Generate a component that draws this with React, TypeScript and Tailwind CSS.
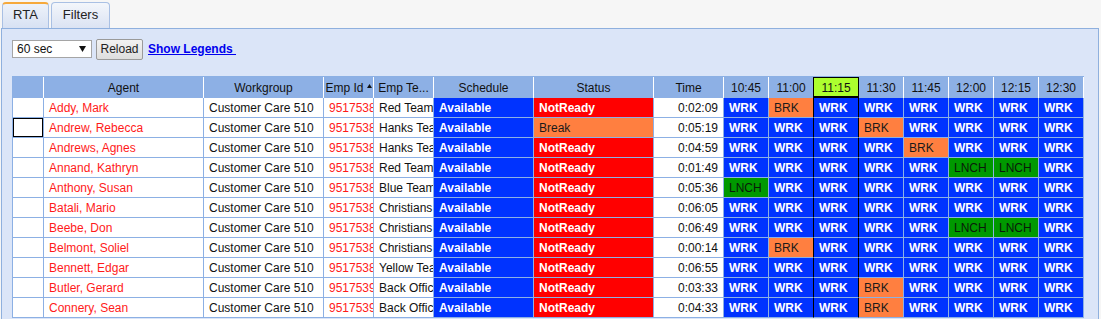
import React from 'react';

const SLOTS = ['10:45', '11:00', '11:15', '11:30', '11:45', '12:00', '12:15', '12:30'];

type Row = { name: string; id: string; team: string; status: 'NotReady' | 'Break'; time: string; plan: string };

// plan: W = work, B = break, L = lunch (one letter per 15 min slot)
const ROWS: Row[] = [
  { name: 'Addy, Mark', id: '951753841', team: 'Red Team', status: 'NotReady', time: '0:02:09', plan: 'WBWWWWWW' },
  { name: 'Andrew, Rebecca', id: '951753851', team: 'Hanks Team', status: 'Break', time: '0:05:19', plan: 'WWWBWWWW' },
  { name: 'Andrews, Agnes', id: '951753852', team: 'Hanks Team', status: 'NotReady', time: '0:04:59', plan: 'WWWWBWWW' },
  { name: 'Annand, Kathryn', id: '951753861', team: 'Red Team', status: 'NotReady', time: '0:01:49', plan: 'WWWWWLLW' },
  { name: 'Anthony, Susan', id: '951753862', team: 'Blue Team', status: 'NotReady', time: '0:05:36', plan: 'LWWWWWWW' },
  { name: 'Batali, Mario', id: '951753871', team: 'Christians Team', status: 'NotReady', time: '0:06:05', plan: 'WWWWWWWW' },
  { name: 'Beebe, Don', id: '951753881', team: 'Christians Team', status: 'NotReady', time: '0:06:49', plan: 'WWWWWLLW' },
  { name: 'Belmont, Soliel', id: '951753891', team: 'Christians Team', status: 'NotReady', time: '0:00:14', plan: 'WBWWWWWW' },
  { name: 'Bennett, Edgar', id: '951753892', team: 'Yellow Team', status: 'NotReady', time: '0:06:55', plan: 'WWWWWWWW' },
  { name: 'Butler, Gerard', id: '951753921', team: 'Back Office', status: 'NotReady', time: '0:03:33', plan: 'WWWBWWWW' },
  { name: 'Connery, Sean', id: '951753951', team: 'Back Office', status: 'NotReady', time: '0:04:33', plan: 'WWWBWWWW' },
];

const cell = 'h-[20px] p-0 border-r border-b border-[#8cb0e4] overflow-hidden whitespace-nowrap';

function slotCell(code: string, i: number) {
  const edge = i === 1 || i === 2 ? 'border-r-black' : '';
  if (code === 'B')
    return <td key={i} className={`${cell} ${edge} bg-[#ff7f40] pl-[5px] text-[#1a1a1a]`}>BRK</td>;
  if (code === 'L')
    return <td key={i} className={`${cell} ${edge} bg-[#009900] pl-[5px] text-[#0a1a0a]`}>LNCH</td>;
  return <td key={i} className={`${cell} ${edge} bg-[#0033ff] pl-[5px] font-bold text-white`}>WRK</td>;
}

export default function App() {
  return (
    <div className="h-[319px] w-[1101px] overflow-hidden bg-[#f6f6f6] font-['Liberation_Sans',Arial,sans-serif] text-[12px] text-[#111]">
      {/* tabs */}
      <div className="flex h-[28px] items-end gap-[2px] pl-[2px]">
        <div className="flex h-[26px] w-[47px] items-center justify-center rounded-t-[4px] border-x border-t-2 border-[#a9c0e4] border-t-[#f6a93b] bg-gradient-to-b from-[#edf2fa] to-[#d7e1f3] pb-[2px] text-[13px] text-[#222]">
          RTA
        </div>
        <div className="flex h-[26px] w-[59px] items-center justify-center rounded-t-[4px] border-x border-t border-[#a9c0e4] bg-gradient-to-b from-[#f3f6fb] to-[#dbe3f3] pb-[1px] text-[13px] text-[#222]">
          Filters
        </div>
      </div>

      {/* panel */}
      <div className="ml-[1px] h-[300px] w-[1098px] border border-[#8fb0de] bg-[#dbe5f8] pl-[10px] pt-[9px]">
        <div className="flex h-[22px] items-center">
          <div className="flex h-[18px] w-[80px] items-center justify-between border border-[#a5a5a5] bg-white pl-[4px] pr-[5px] text-[12px]">
            <span>60 sec</span>
            <svg width="7" height="6" viewBox="0 0 7 6">
              <path d="M0 0h7L3.5 6z" fill="#111" />
            </svg>
          </div>
          <button className="ml-[4px] h-[21px] w-[47px] rounded-[2px] border border-[#9a9a9a] bg-gradient-to-b from-[#f2f2f2] to-[#dedede] text-[12px] text-[#222]">
            Reload
          </button>
          <a className="ml-[5px] text-[12px] font-bold text-[#0000ee] underline">Show Legends&nbsp;</a>
        </div>

        <table className="mt-[16px] w-[1072px] table-fixed border-separate border-spacing-0 border-l border-t border-[#8cb0e4]">
          <colgroup>
            <col className="w-[31px]" />
            <col className="w-[160px]" />
            <col className="w-[120px]" />
            <col className="w-[50px]" />
            <col className="w-[60px]" />
            <col className="w-[100px]" />
            <col className="w-[120px]" />
            <col className="w-[70px]" />
            {SLOTS.map((s) => (
              <col key={s} className="w-[45px]" />
            ))}
          </colgroup>
          <thead>
            <tr className="h-[21px] bg-[#8db0e5] text-[12px] font-normal text-[#111]">
              <th className="border-r border-white p-0 font-normal" />
              <th className="border-r border-white p-0 font-normal">Agent</th>
              <th className="border-r border-white p-0 font-normal">Workgroup</th>
              <th className="overflow-hidden whitespace-nowrap border-r border-white p-0 font-normal">
                Emp Id
                <svg className="ml-[3px] inline-block align-[4px]" width="5" height="4" viewBox="0 0 5 4">
                  <path d="M2.5 0L5 4H0z" fill="#111" />
                </svg>
              </th>
              <th className="overflow-hidden whitespace-nowrap border-r border-white p-0 font-normal">Emp Te...</th>
              <th className="border-r border-white p-0 font-normal">Schedule</th>
              <th className="border-r border-white p-0 font-normal">Status</th>
              <th className="border-r border-white p-0 font-normal">Time</th>
              {SLOTS.map((s, i) =>
                i === 2 ? (
                  <th key={s} className="border-r border-r-black bg-[#adff2f] p-0 font-normal shadow-[inset_0_1px_0_#000,inset_0_-2px_0_#000]">
                    {s}
                  </th>
                ) : (
                  <th key={s} className={`border-r ${i === 1 ? 'border-r-black' : 'border-white'} p-0 font-normal`}>
                    {s}
                  </th>
                ),
              )}
            </tr>
          </thead>
          <tbody>
            {ROWS.map((r, ri) => (
              <tr key={r.name}>
                <td className={`${cell} bg-white ${ri === 1 ? 'shadow-[inset_0_0_0_1px_#000]' : ''}`} />
                <td className={`${cell} bg-white pl-[5px] text-[#ff1a1a]`}>{r.name}</td>
                <td className={`${cell} bg-white pl-[5px]`}>Customer Care 510</td>
                <td className={`${cell} bg-white pl-[5px] text-[#ff1a1a]`}>{r.id}</td>
                <td className={`${cell} bg-white pl-[5px]`}>{r.team}</td>
                <td className={`${cell} bg-[#0033ff] pl-[5px] font-bold text-white`}>Available</td>
                {r.status === 'Break' ? (
                  <td className={`${cell} bg-[#ff7f40] pl-[5px] text-[#1a1a1a]`}>Break</td>
                ) : (
                  <td className={`${cell} bg-[#ff0000] pl-[5px] font-bold text-white`}>NotReady</td>
                )}
                <td className={`${cell} bg-white pr-[5px] text-right`}>{r.time}</td>
                {r.plan.split('').map((c, i) => slotCell(c, i))}
              </tr>
            ))}
          </tbody>
        </table>
      </div>
    </div>
  );
}
